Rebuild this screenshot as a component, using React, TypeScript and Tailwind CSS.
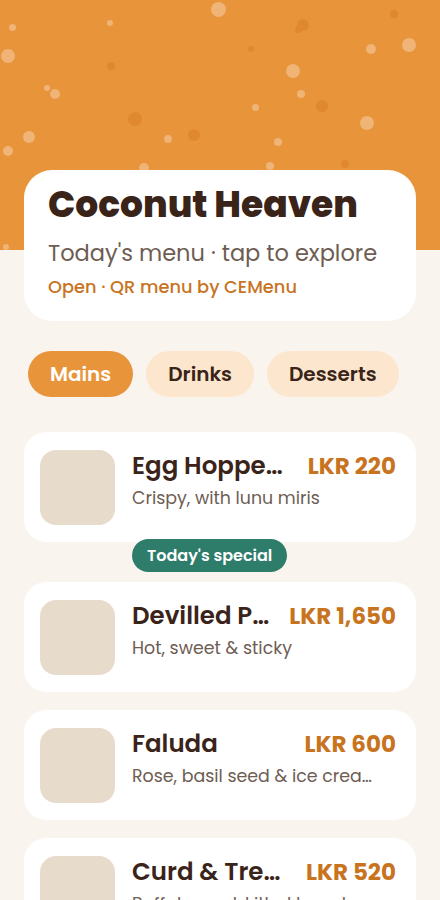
import React from 'react';

type Dish = {
  name: string;
  desc: string;
  price: string;
  badge?: string;
};

const dishes: Dish[] = [
  { name: 'Egg Hoppers (2)', desc: 'Crispy, with lunu miris', price: 'LKR 220', badge: "Today's special" },
  { name: 'Devilled Prawns', desc: 'Hot, sweet & sticky', price: 'LKR 1,650' },
  { name: 'Faluda', desc: 'Rose, basil seed & ice cream float', price: 'LKR 600' },
  { name: 'Curd & Treacle', desc: 'Buffalo curd, kithul treacle', price: 'LKR 520' },
];

// header speckles: [x, y, size, light?]
const dots: [number, number, number, boolean][] = [
  [218, 9, 15, true], [12, 27, 7, true], [110, 23, 6, true], [8, 56, 14, true],
  [55, 94, 10, true], [47, 88, 6, true], [29, 137, 12, true], [8, 151, 10, true],
  [168, 139, 8, true], [293, 71, 14, true], [301, 94, 8, true], [255, 107, 7, true],
  [278, 142, 8, true], [371, 49, 10, true], [409, 45, 14, true], [367, 123, 14, true],
  [144, 168, 10, true], [270, 166, 8, true], [6, 247, 6, true],
  [303, 25, 12, false], [298, 29, 7, false], [394, 14, 8, false], [251, 49, 6, false],
  [111, 66, 8, false], [135, 119, 14, false], [194, 135, 12, false], [322, 106, 12, false],
  [345, 164, 8, false],
];

const tabs = ['Mains', 'Drinks', 'Desserts'];

function DishCard({ dish }: { dish: Dish }) {
  return (
    <div className={`relative ${dish.badge ? 'mb-[22px]' : ''}`}>
      <div className="flex h-[110px] items-center gap-[17px] rounded-[22px] bg-white pl-4 pr-5">
        <div className="h-[75px] w-[75px] shrink-0 rounded-[16px] bg-[#E7DCCC]" />
        <div className="flex min-w-0 flex-1 flex-col self-start pt-[17px]">
          <div className="flex items-center gap-4">
            <div className="min-w-0 flex-1 truncate text-[24.5px] font-semibold leading-[34px] text-[#3A2419]">
              {dish.name}
            </div>
            <div className="shrink-0 text-[23px] font-bold leading-[34px] text-[#C8741F]">{dish.price}</div>
          </div>
          <div className="truncate pr-3 text-[17.4px] leading-[30px] text-[#6E5D53]">{dish.desc}</div>
        </div>
      </div>
      {dish.badge && (
        <div className="absolute left-[108px] top-[107px] rounded-full bg-[#2E7D6B] px-[15px] py-[5px] text-[16px] font-semibold leading-[23px] text-white">
          {dish.badge}
        </div>
      )}
    </div>
  );
}

export default function App() {
  return (
    <div
      className="h-[900px] w-[440px] overflow-hidden bg-[#F9F4EE]"
      style={{ fontFamily: 'Poppins, Inter, "Open Sans", sans-serif' }}
    >
      <div className="relative h-[250px] bg-[#E8943A]">
        {dots.map(([x, y, s, light], i) => (
          <span
            key={i}
            className={`absolute rounded-full ${light ? 'bg-[#EFB476]' : 'bg-[#DF8830]'}`}
            style={{ left: x - s / 2, top: y - s / 2, width: s, height: s }}
          />
        ))}
      </div>

      <div className="relative z-10 mx-6 -mt-20 rounded-[28px] bg-white px-6 pb-[21px] pt-[12px]">
        <h1 className="text-[36px] font-extrabold leading-[46px] text-[#3A2419]">Coconut Heaven</h1>
        <p className="mt-[10px] text-[22.5px] leading-[30px] text-[#6E5D53]">Today's menu · tap to explore</p>
        <p className="mt-[6px] text-[17.8px] font-medium leading-[26px] text-[#C8741F]">Open · QR menu by CEMenu</p>
      </div>

      <div className="mt-[30px] flex gap-[13px] px-7">
        {tabs.map((t, i) => (
          <button
            key={t}
            className={`h-[46px] rounded-full px-[22px] text-[20px] font-semibold ${
              i === 0 ? 'bg-[#E8943A] text-white' : 'bg-[#FCE7CE] text-[#3A2419]'
            }`}
          >
            {t}
          </button>
        ))}
      </div>

      <div className="mt-[35px] flex flex-col gap-[18px] px-6">
        {dishes.map((d) => (
          <DishCard key={d.name} dish={d} />
        ))}
      </div>
    </div>
  );
}
